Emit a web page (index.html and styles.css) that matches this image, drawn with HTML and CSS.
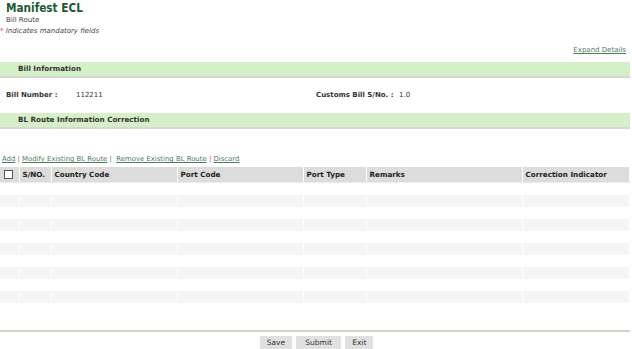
FILE: index.html
```html
<!DOCTYPE html>
<html lang="en">
<head>
    <meta charset="UTF-8">
    <title>Manifest ECL</title>
    <link rel="stylesheet" href="styles.css">
</head>
<body>
    <div class="page">
        <div class="header">
            <h1>Manifest ECL</h1>
            <div class="sub">Bill Route</div>
            <div class="mandatory"><span class="star">*</span> Indicates mandatory fields</div>
        </div>
        <div class="expand"><a href="#">Expand Details</a></div>

        <div class="section-bar">Bill Information</div>
        <div class="info-row">
            <div class="info-cell">
                <span class="label">Bill Number :</span>
                <span class="value">112211</span>
            </div>
            <div class="info-cell">
                <span class="label">Customs Bill S/No. :</span>
                <span class="value">1.0</span>
            </div>
        </div>

        <div class="section-bar">BL Route Information Correction</div>

        <div class="actions">
            <a href="#">Add</a> <span class="sep">|</span>
            <a href="#">Modify Existing BL Route</a> <span class="sep">|</span>&nbsp;
            <a href="#">Remove Existing BL Route</a> <span class="sep">|</span>
            <a href="#">Discard</a>
        </div>

        <table class="grid">
            <colgroup>
                <col class="c-check">
                <col class="c-sno">
                <col class="c-country">
                <col class="c-port">
                <col class="c-type">
                <col class="c-remarks">
                <col>
            </colgroup>
            <thead>
                <tr>
                    <th class="check"><span class="box"></span></th>
                    <th>S/NO.</th>
                    <th>Country Code</th>
                    <th>Port Code</th>
                    <th>Port Type</th>
                    <th>Remarks</th>
                    <th>Correction Indicator</th>
                </tr>
            </thead>
            <tbody>
                <tr><td></td><td></td><td></td><td></td><td></td><td></td><td></td></tr>
                <tr class="alt"><td></td><td></td><td></td><td></td><td></td><td></td><td></td></tr>
                <tr><td></td><td></td><td></td><td></td><td></td><td></td><td></td></tr>
                <tr class="alt"><td></td><td></td><td></td><td></td><td></td><td></td><td></td></tr>
                <tr><td></td><td></td><td></td><td></td><td></td><td></td><td></td></tr>
                <tr class="alt"><td></td><td></td><td></td><td></td><td></td><td></td><td></td></tr>
                <tr><td></td><td></td><td></td><td></td><td></td><td></td><td></td></tr>
                <tr class="alt"><td></td><td></td><td></td><td></td><td></td><td></td><td></td></tr>
                <tr><td></td><td></td><td></td><td></td><td></td><td></td><td></td></tr>
                <tr class="alt"><td></td><td></td><td></td><td></td><td></td><td></td><td></td></tr>
                <tr><td></td><td></td><td></td><td></td><td></td><td></td><td></td></tr>
            </tbody>
        </table>

        <div class="footer">
            <button>Save</button>
            <button>Submit</button>
            <button>Exit</button>
        </div>
    </div>
</body>
</html>
```

FILE: styles.css
```css
body {
    margin: 0;
    font-family: "DejaVu Sans", Verdana, sans-serif;
    font-size: 7px;
    color: #333;
    background-color: white;
}
.page {
    width: 630px;
}
.header {
    padding-top: 1px;
}
h1 {
    margin: 0 0 0 6px;
    font-family: "DejaVu Sans Condensed", "DejaVu Sans", sans-serif;
    font-size: 11.7px;
    line-height: 14px;
    color: #1a5a32;
}
.sub {
    margin-left: 6px;
    line-height: 10px;
    color: #444;
}
.mandatory {
    line-height: 12px;
    font-style: italic;
    color: #444;
}
.star {
    color: #e0407a;
    font-style: normal;
}
.expand {
    text-align: right;
    padding: 8px 4px 0 0;
    line-height: 10px;
}
a {
    color: #4f7a5c;
}
.section-bar {
    margin-top: 7px;
    height: 14px;
    line-height: 14px;
    padding-left: 18px;
    background-color: #d5f0c8;
    border-bottom: 2px solid #d6d6d6;
    font-weight: bold;
    font-size: 7.2px;
    color: #333;
}
.info-row {
    display: flex;
    padding: 11px 0 4px 6px;
    line-height: 13px;
}
.info-cell {
    width: 310px;
    display: flex;
}
.label {
    font-weight: bold;
    width: 70px;
}
.info-cell + .info-cell .label {
    width: 83px;
}
.actions {
    margin-top: 24px;
    margin-left: 2px;
    line-height: 12px;
    font-size: 6.9px;
}
.sep {
    color: #8a6a8a;
}
.grid {
    margin-top: 2px;
    width: 630px;
    border-collapse: collapse;
    table-layout: fixed;
}
.c-check { width: 19px; }
.c-sno { width: 32px; }
.c-country { width: 126px; }
.c-port { width: 126px; }
.c-type { width: 63px; }
.c-remarks { width: 156px; }
.grid th {
    background-color: #dcdcdc;
    height: 15px;
    padding: 0 0 0 3px;
    text-align: left;
    font-size: 7.2px;
    color: #222;
    border-right: 1px solid white;
    border-bottom: 1px solid #e8f0e4;
}
.grid th.check {
    padding-left: 4px;
}
.grid td {
    height: 12px;
    padding: 0;
    border-right: 1px solid white;
}
.grid tr.alt td {
    background-color: #f5f5f5;
}
.box {
    display: inline-block;
    width: 7px;
    height: 7px;
    border: 1px solid #555;
    background-color: white;
    vertical-align: middle;
}
.footer {
    margin-top: 15px;
    border-top: 2px solid #d4d4c4;
    padding-top: 4px;
    padding-left: 3px;
    text-align: center;
}
.footer button {
    font-family: "DejaVu Sans", Verdana, sans-serif;
    font-size: 7.5px;
    color: #333;
    background-color: #e0e0e0;
    border: none;
    border-bottom: 1px dotted #aaa;
    height: 14px;
    padding: 0 7px;
    margin: 0 1px;
}
.footer button:nth-child(2) {
    padding: 0 9px;
}
```
